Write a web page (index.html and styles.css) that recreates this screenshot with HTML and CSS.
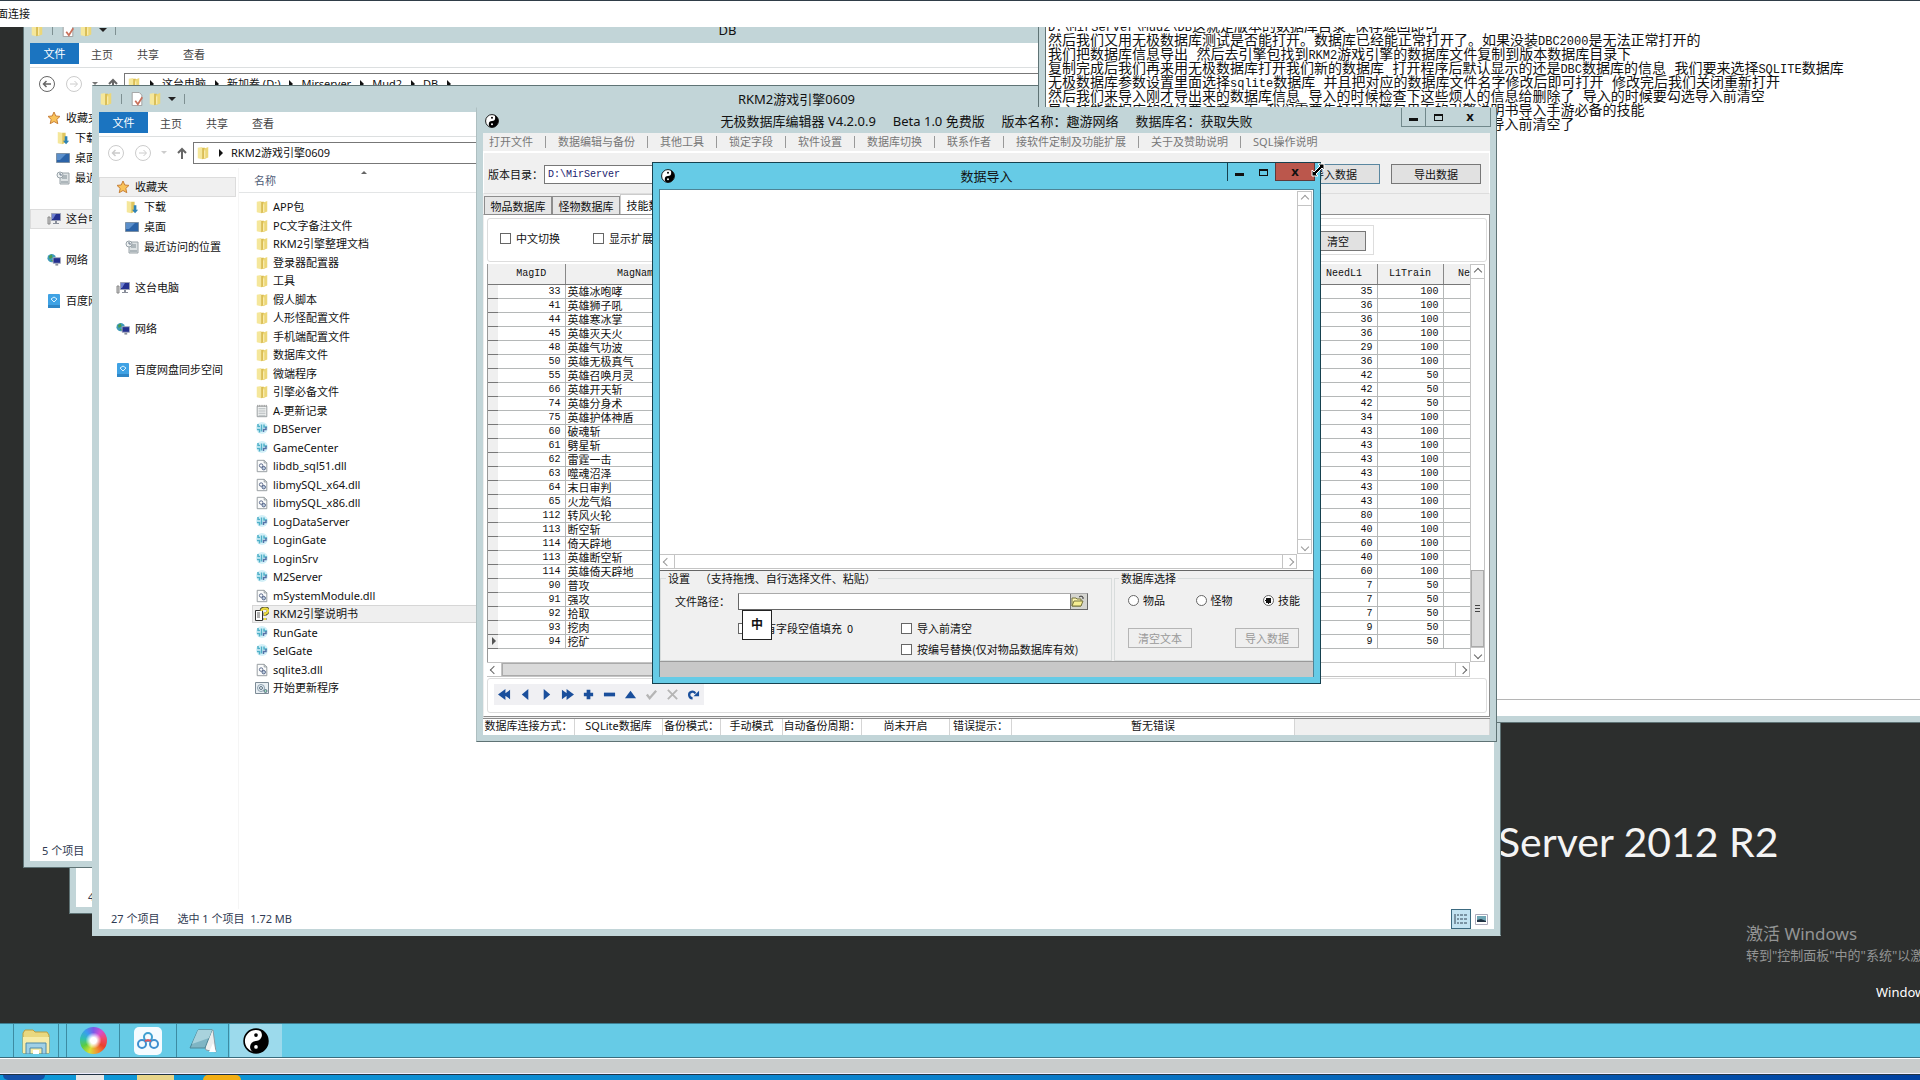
FILE: index.html
```
<!DOCTYPE html>
<html lang="zh-CN">
<head>
  <meta charset="utf-8">
  <title>远程桌面连接</title>
  <link rel="stylesheet" href="styles.css">
</head>
<body>
  <!-- Icon set -->
  <svg class="defs" width="0" height="0">
    <symbol id="i-folder" viewBox="0 0 14 16">
      <path d="M1 2l5-1v14l-5-1z" fill="#f5e79b"/><path d="M6 2h3l1 1v11l-4 1z" fill="#d9bb4e"/><path d="M8 3l5-2v12l-5 2z" fill="#ecd778"/><path d="M9 5v9" stroke="#fff6c8"/>
    </symbol>
    <symbol id="i-star" viewBox="0 0 14 14">
      <path d="M7 1l1.800 4 4.200.4-3.200 3 1 4.300L7 10.500 3.200 12.700l1-4.300L1 5.400 5.200 5z" fill="#f9c35a" stroke="#c8813a"/>
    </symbol>
    <symbol id="i-down" viewBox="0 0 14 16">
      <path d="M1 1l5 1v13l-5-1z" fill="#f5e79b"/><path d="M6 2h4v11l-4 2z" fill="#e0c65e"/><path d="M9 6h3v5h2l-3.500 4L7 11h2z" fill="#2f83b5"/>
    </symbol>
    <symbol id="i-desk" viewBox="0 0 14 12">
      <path d="M.500 1.500h13v9H.500z" fill="#2b63a8" stroke="#7a8fa5"/><path d="M1 2h9L4 8H1z" fill="#5b8fcb"/>
    </symbol>
    <symbol id="i-recent" viewBox="0 0 14 14">
      <path d="M4 2h9v11H4z" fill="#dde2e4" stroke="#9aa3a8"/><path d="M6 5h5M6 7h5M5 11h7" stroke="#7f8b92"/><circle cx="4" cy="4" r="3" fill="#eef1f2" stroke="#98a2a8"/><path d="M4 2v2h2" stroke="#678" fill="none"/>
    </symbol>
    <symbol id="i-pc" viewBox="0 0 14 14">
      <path d="M1 5h2v7H1z" fill="#ccc" stroke="#888"/><path d="M4.500 1.500h9v7h-9z" fill="#23308f" stroke="#9a9fb5"/><path d="M5 2h4l-3 5H5z" fill="#6d7fd0"/><path d="M8 9h2v2h2v1H6v-1h2z" fill="#8a8f9b"/>
    </symbol>
    <symbol id="i-net" viewBox="0 0 15 14">
      <circle cx="5" cy="5" r="4.500" fill="#3e9bb8"/><path d="M2 3l3-2 1 3-3 2zM4 7h3l-1 2z" fill="#4a9a4c"/><path d="M6.500 4.500h8v6h-8z" fill="#23308f" stroke="#a8adc0"/><path d="M9 11h3v2H9z" fill="#8a8f9b"/>
    </symbol>
    <symbol id="i-pan" viewBox="0 0 14 14">
      <rect x="1" y="0" width="12" height="14" rx="1" fill="#3fa2e4"/><path d="M4 5l3-2 3 2-3 3z" fill="none" stroke="#d9f1ff"/><path d="M1 11h12v3H1z" fill="#2f86c6"/>
    </symbol>
    <symbol id="i-text" viewBox="0 0 14 16">
      <path d="M1.500 2.500h11v12h-11z" fill="#f5f6f6" stroke="#8d9396"/><path d="M3 5h8M3 7h8M3 9h8M3 11h8M3 13h8" stroke="#b4babd"/><path d="M2 1v2M4 1v2M6 1v2M8 1v2M10 1v2M12 1v2" stroke="#999"/>
    </symbol>
    <symbol id="i-exe" viewBox="0 0 14 14">
      <circle cx="7" cy="6" r="6" fill="#d3f0f8"/><path d="M3 2v2.500h2M2 7.500h2.500v3M6.500 2.500v7M9 2.500V5h3" stroke="#4fb0c8" stroke-width="1.500" fill="none"/><path d="M8.500 10V7.500H11V5" stroke="#5573a8" stroke-width="1.500" fill="none"/>
    </symbol>
    <symbol id="i-dll" viewBox="0 0 14 16">
      <path d="M1.500 1.500h8l3 3v10h-11z" fill="#fafbfb" stroke="#8b9297"/><path d="M9.500 1.500v3h3" fill="none" stroke="#8b9297"/><circle cx="6" cy="7.500" r="2" fill="none" stroke="#4a5a80"/><circle cx="9" cy="10.500" r="2" fill="#bcd" stroke="#4a5a80"/>
    </symbol>
    <symbol id="i-chm" viewBox="0 0 14 14">
      <path d="M.500 3.500h7v10h-7z" fill="#fff" stroke="#333"/><path d="M2 6h3M2 8h3M2 10h3" stroke="#666"/><path d="M6 4q0-3 4-3t3 4q-1 2-3 2v2M10 11v2" stroke="#555533" stroke-width="3" fill="none"/><path d="M6.500 4q0-2.500 3.500-2.500t3 3q-1 2-3 2v2M10 11v2" stroke="#eedc3c" stroke-width="2" fill="none"/>
    </symbol>
    <symbol id="i-bat" viewBox="0 0 14 12">
      <path d="M.500.500h13v11H.500z" fill="#e9eff3" stroke="#7d8b96"/><circle cx="6" cy="6" r="3.500" fill="none" stroke="#8ba0b0"/><circle cx="6" cy="6" r="1.500" fill="none" stroke="#5d7385"/><circle cx="10.500" cy="9" r="1.500" fill="#9db" stroke="#5d7385"/>
    </symbol>
    <symbol id="i-prop" viewBox="0 0 14 16">
      <path d="M1.500.500h8l3 3v12h-11z" fill="#fff" stroke="#999"/><path d="M5 10l3 4 5-8" stroke="#c9705a" stroke-width="2" fill="none"/>
    </symbol>
    <symbol id="i-yin" viewBox="0 0 24 24">
      <circle cx="12" cy="12" r="11" fill="#fff" stroke="#000" stroke-width="1.500"/><path d="M12 1a11 11 0 0 1 0 22 5.500 5.500 0 0 1 0-11 5.500 5.500 0 0 0 0-11z" fill="#000"/><circle cx="12" cy="6.500" r="1.700"/><circle cx="12" cy="17.500" r="1.700" fill="#fff"/>
    </symbol>
    <symbol id="i-back" viewBox="0 0 18 18">
      <circle cx="9" cy="9" r="7.500" fill="none" stroke="currentColor"/><path d="M13 9H6M8.500 6l-3 3 3 3" fill="none" stroke="currentColor" stroke-width="1.500"/>
    </symbol>
    <symbol id="i-fwd" viewBox="0 0 18 18">
      <circle cx="9" cy="9" r="7.500" fill="none" stroke="currentColor"/><path d="M5 9h7M9.500 6l3 3-3 3" fill="none" stroke="currentColor"/>
    </symbol>
    <symbol id="i-up" viewBox="0 0 10 12">
      <path d="M5 12V2M1 6l4-4 4 4" fill="none" stroke="#666" stroke-width="2"/>
    </symbol>
  </svg>

  <header class="rdp-title">面连接</header>

  <main class="desktop">
    <div class="brand">Server 2012 R2</div>
    <div class="activate">
      <p class="activate-title">激活 Windows</p>
      <p class="activate-text">转到"控制面板"中的"系统"以激活 Windows。</p>
    </div>
    <div class="build">Windows Server 2012 R2</div>

    <section class="win explorer explorer-hidden">
      <div class="explorer-body"></div>
      <footer class="explorer-status"><span>4 个项目</span></footer>
    </section>

    <!-- Explorer: DB -->
    <section class="win explorer explorer-db">
      <div class="titlebar">
        <div class="qat">
          <svg class="ic"><use href="#i-folder"/></svg><i></i>
          <svg class="ic"><use href="#i-prop"/></svg><svg class="ic"><use href="#i-folder"/></svg>
          <span class="qat-more"></span><i></i>
        </div>
        <h1>DB</h1>
      </div>
      <div class="ribbon"><button class="file-tab">文件</button><button>主页</button><button>共享</button><button>查看</button></div>
      <div class="addr-row">
        <svg class="round on"><use href="#i-back"/></svg><svg class="round"><use href="#i-fwd"/></svg>
        <span class="caret"></span><svg class="up"><use href="#i-up"/></svg>
        <div class="addr">
          <svg class="ic"><use href="#i-folder"/></svg>
          <b></b><span>这台电脑</span><b></b><span>新加卷 (D:)</span><b></b><span>Mirserver</span><b></b><span>Mud2</span><b></b><span>DB</span><b></b>
        </div>
      </div>
      <div class="explorer-body">
        <nav class="tree">
          <a href="#"><svg class="ic"><use href="#i-star"/></svg>收藏夹</a>
          <a href="#" class="sub"><svg class="ic"><use href="#i-down"/></svg>下载</a>
          <a href="#" class="sub"><svg class="ic"><use href="#i-desk"/></svg>桌面</a>
          <a href="#" class="sub"><svg class="ic"><use href="#i-recent"/></svg>最近访问的位置</a>
          <a href="#" class="root active"><svg class="ic"><use href="#i-pc"/></svg>这台电脑</a>
          <a href="#" class="root"><svg class="ic"><use href="#i-net"/></svg>网络</a>
          <a href="#" class="root"><svg class="ic"><use href="#i-pan"/></svg>百度网盘同步空间</a>
        </nav>
      </div>
      <footer class="explorer-status"><span>5 个项目</span></footer>
    </section>

    <!-- Explorer: engine folder -->
    <section class="win explorer explorer-main">
      <div class="titlebar">
        <div class="qat">
          <svg class="ic"><use href="#i-folder"/></svg><i></i>
          <svg class="ic"><use href="#i-prop"/></svg><svg class="ic"><use href="#i-folder"/></svg>
          <span class="qat-more"></span><i></i>
        </div>
        <h1>RKM2游戏引擎0609</h1>
      </div>
      <div class="ribbon"><button class="file-tab">文件</button><button>主页</button><button>共享</button><button>查看</button></div>
      <div class="addr-row">
        <svg class="round"><use href="#i-back"/></svg><svg class="round"><use href="#i-fwd"/></svg>
        <span class="caret off"></span><svg class="up"><use href="#i-up"/></svg>
        <div class="addr"><svg class="ic"><use href="#i-folder"/></svg><b></b><span>RKM2游戏引擎0609</span></div>
      </div>
      <div class="explorer-body">
        <nav class="tree">
          <a href="#" class="active"><svg class="ic"><use href="#i-star"/></svg>收藏夹</a>
          <a href="#" class="sub"><svg class="ic"><use href="#i-down"/></svg>下载</a>
          <a href="#" class="sub"><svg class="ic"><use href="#i-desk"/></svg>桌面</a>
          <a href="#" class="sub"><svg class="ic"><use href="#i-recent"/></svg>最近访问的位置</a>
          <a href="#" class="root"><svg class="ic"><use href="#i-pc"/></svg>这台电脑</a>
          <a href="#" class="root"><svg class="ic"><use href="#i-net"/></svg>网络</a>
          <a href="#" class="root"><svg class="ic"><use href="#i-pan"/></svg>百度网盘同步空间</a>
        </nav>
        <div class="files">
          <div class="files-head">名称<span class="sort"></span></div>
          <ul id="fileList"></ul>
        </div>
      </div>
      <footer class="explorer-status">
        <span>27 个项目</span><span>选中 1 个项目&nbsp; 1.72 MB</span>
        <div class="views">
          <button class="view-btn on" aria-label="详细信息"><svg width="14" height="12" viewBox="0 0 14 12"><path d="M1 1v10M3 2h2M3 6h2M3 10h2M6 2h3M10 2h3M6 6h3M10 6h3M6 10h3M10 10h3" stroke="#345" fill="none"/></svg></button>
          <button class="view-btn" aria-label="大图标"><svg width="13" height="11" viewBox="0 0 13 11"><path d="M.500.500h12v10H.500z" fill="#fff" stroke="#aab"/><path d="M2 2h9v6H2z" fill="#6fa6b4"/><path d="M2 6l4-1 5 2v1H2z" fill="#234"/></svg></button>
        </div>
      </footer>
    </section>

    <!-- Notes -->
    <section class="win notes">
      <div class="notes-text">
        <p><code>D:\MirServer\Mud2\DB</code>这就是版本的数据库目录 保存返回即可</p>
        <p>然后我们又用无极数据库测试是否能打开。数据库已经能正常打开了。如果没装<code>DBC2000</code>是无法正常打开的</p>
        <p>我们把数据库信息导出 然后去引擎包找到<code>RKM2</code>游戏引擎的数据库文件复制到版本数据库目录下</p>
        <p>复制完成后我们再来用无极数据库打开我们新的数据库 打开程序后默认显示的还是<code>DBC</code>数据库的信息 我们要来选择<code>SQLITE</code>数据库</p>
        <p>无极数据库参数设置里面选择<code>sqlite</code>数据库 并且把对应的数据库文件名字修改后即可打开 修改完后我们关闭重新打开</p>
        <p>然后我们来导入刚才导出来的数据库信息 导入的时候检查下这些烦人的信息给删除了 导入的时候要勾选导入前清空</p>
        <p>导入技能数据库的时候要注意一下 我们需要先打开引擎包里面的引擎说明书导入手游必备的技能</p>
        <p>导入技能的时候不要再勾选清空了 因为前面已经导入过一次数据所以不导入前清空了</p>
      </div>
      <div class="notes-status"></div>
    </section>

    <!-- Database editor -->
    <section class="win editor">
      <div class="titlebar">
        <svg class="yin"><use href="#i-yin"/></svg>
        <h1>无极数据库编辑器 V4.2.0.9&nbsp;&nbsp;&nbsp;&nbsp; Beta 1.0 免费版&nbsp;&nbsp;&nbsp;&nbsp; 版本名称：趣游网络&nbsp;&nbsp;&nbsp;&nbsp; 数据库名：获取失败</h1>
        <div class="controls">
          <button aria-label="最小化"><span class="g-min"></span></button><button aria-label="最大化"><span class="g-max"></span></button><button aria-label="关闭">x</button>
        </div>
      </div>
      <div class="editor-body">
        <nav class="menu">
          <a href="#">打开文件</a><a href="#">数据编辑与备份</a><a href="#">其他工具</a><a href="#">锁定字段</a><a href="#">软件设置</a><a href="#">数据库切换</a><a href="#">联系作者</a><a href="#">接软件定制及功能扩展</a><a href="#">关于及赞助说明</a><a href="#">SQL操作说明</a>
        </nav>
        <div class="path-row">
          <label for="verPath">版本目录：</label>
          <input type="text" id="verPath" value="D:\MirServer">
          <button class="btn focus">导入数据</button>
          <button class="btn">导出数据</button>
        </div>
        <div class="tabs"><button>物品数据库</button><button>怪物数据库</button><button class="current">技能数据库</button></div>
        <div class="page">
          <div class="options">
            <label><input type="checkbox">中文切换</label>
            <label><input type="checkbox">显示扩展</label>
            <div class="search"><button class="btn">清空</button></div>
          </div>
          <div class="grid">
            <div class="grid-view">
              <table>
                <colgroup><col class="c-mark"><col class="c-id"><col class="c-name"><col><col class="c-num"><col class="c-num"><col class="c-last"></colgroup>
                <thead><tr><th></th><th>MagID</th><th>MagName</th><th></th><th>NeedL1</th><th>L1Train</th><th>Ne</th></tr></thead>
                <tbody id="magicRows"></tbody>
              </table>
            </div>
            <div class="vscroll"><span class="arrow a-up"></span><span class="track"></span><span class="thumb"></span><span class="arrow a-down"></span></div>
            <div class="hscroll"><span class="arrow a-left"></span><span class="thumb"></span><span class="track"></span><span class="arrow a-right"></span></div>
          </div>
          <div class="navigator">
            <div class="nav-btns">
              <button aria-label="第一条"><svg viewBox="0 0 14 14"><path d="M8 1v12L0 7zM13 2v10L6 7z"/></svg></button>
              <button aria-label="上一条"><svg viewBox="0 0 14 14"><path d="M10 1v12L3 7z"/></svg></button>
              <button aria-label="下一条"><svg viewBox="0 0 14 14"><path d="M4 1v12l7-6z"/></svg></button>
              <button aria-label="最后一条"><svg viewBox="0 0 14 14"><path d="M1 2v10l7-5zM6 1v12l8-6z"/></svg></button>
              <button aria-label="新增"><svg viewBox="0 0 14 14"><path d="M5 2h4v3h3v4H9v3H5V9H2V5h3z"/></svg></button>
              <button aria-label="删除"><svg viewBox="0 0 14 14"><path d="M1 5h12v4H1z"/></svg></button>
              <button aria-label="编辑"><svg viewBox="0 0 14 14"><path d="M7 3l6 8H1z"/></svg></button>
              <button aria-label="提交" disabled><svg viewBox="0 0 14 14"><path d="M2 7l3 4 7-8" fill="none" stroke="#b5b5b5" stroke-width="2.500"/></svg></button>
              <button aria-label="取消" disabled><svg viewBox="0 0 14 14"><path d="M2 2l10 10M12 2L2 12" stroke="#b5b5b5" stroke-width="2"/></svg></button>
              <button aria-label="刷新"><svg viewBox="0 0 14 14"><path d="M6 11a3.500 3.500 0 1 1 3-5" fill="none" stroke="#1a4f9c" stroke-width="2.500"/><path d="M7 9h6V3z"/></svg></button>
            </div>
          </div>
        </div>
        <footer class="db-status">
          <span class="s1">数据库连接方式：</span><span class="s2">SQLite数据库</span><span class="s3">备份模式：</span><span class="s4">手动模式</span><span class="s5">自动备份周期：</span><span class="s6">尚未开启</span><span class="s7">错误提示：</span><span class="s8">暂无错误</span><span class="s9"></span>
        </footer>
      </div>
    </section>

    <!-- Import dialog -->
    <section class="win dialog" role="dialog">
      <div class="titlebar">
        <svg class="yin"><use href="#i-yin"/></svg>
        <h1>数据导入</h1>
        <div class="controls">
          <button aria-label="最小化"><span class="g-min"></span></button><button aria-label="最大化"><span class="g-max"></span></button><button class="close" aria-label="关闭">x</button>
        </div>
      </div>
      <div class="dialog-body">
        <div class="memo">
          <textarea aria-label="数据"></textarea>
          <div class="vscroll"><span class="arrow a-up"></span><span class="track"></span><span class="arrow a-down"></span></div>
          <div class="hscroll"><span class="arrow a-left"></span><span class="track"></span><span class="arrow a-right"></span></div>
        </div>
        <div class="groups">
          <fieldset class="set-group">
            <legend>设置&nbsp;&nbsp;&nbsp;&nbsp;（支持拖拽、自行选择文件、粘贴）</legend>
            <label for="filePath">文件路径：</label>
            <div class="file-box">
              <input type="text" id="filePath">
              <button aria-label="打开"><svg width="13" height="12" viewBox="0 0 13 12"><path d="M1 3h4l1 1h4v7H1z" fill="#fdf6b4" stroke="#77743c"/><path d="M1 11l2-5h9l-2 5z" fill="#f7ee92" stroke="#77743c"/><path d="M8 2q2-2 4 0v2" fill="none" stroke="#333"/></svg></button>
            </div>
            <label class="fill"><input type="checkbox">所有字段空值填充&nbsp; 0</label>
            <label><input type="checkbox">导入前清空</label>
            <label class="replace"><input type="checkbox">按编号替换(仅对物品数据库有效)</label>
          </fieldset>
          <fieldset class="db-group">
            <legend>数据库选择</legend>
            <div class="radios">
              <label><input type="radio" name="db">物品</label>
              <label><input type="radio" name="db">怪物</label>
              <label><input type="radio" name="db" checked>技能</label>
            </div>
            <div class="actions"><button class="btn" disabled>清空文本</button><button class="btn" disabled>导入数据</button></div>
          </fieldset>
        </div>
        <div class="progress"></div>
      </div>
    </section>

    <div class="ime">中</div>
    <svg class="cursor" width="14" height="14" viewBox="0 0 14 14"><path d="M7 1h6v6l-2-2-6 6 2 2H1V7l2 2 6-6z" fill="#000" stroke="#fff"/></svg>
  </main>

  <!-- Remote taskbar -->
  <nav class="taskbar">
    <button class="task first" aria-label="文件资源管理器"><svg width="30" height="26" viewBox="0 0 30 26"><path d="M2 5l2-3h8l2 2h12l2 3v18H2z" fill="#e9d87f" stroke="#b99d42"/><path d="M2 9h26v16H2z" fill="#f6eca9"/><path d="M5 26V15h20v11h-4v-6H9v6z" fill="#9fd0e6" stroke="#4c8aa8"/><path d="M12 26v-4h6v4" fill="#fff"/></svg></button>
    <button class="task" aria-label="浏览器"><span class="wheel"></span></button>
    <button class="task wide" aria-label="百度网盘"><svg width="28" height="28" viewBox="0 0 28 28"><rect width="28" height="28" rx="5" fill="#f4fbff"/><circle cx="14" cy="10" r="4" fill="none" stroke="#3f9fd0" stroke-width="2"/><circle cx="8" cy="17" r="4" fill="none" stroke="#3f8fd0" stroke-width="2"/><circle cx="20" cy="17" r="4" fill="none" stroke="#3f8fd0" stroke-width="2"/><path d="M11 14l3-1 3 1" stroke="#e0555e" stroke-width="2" fill="none"/></svg></button>
    <button class="task" aria-label="记事本"><svg width="28" height="26" viewBox="0 0 28 26"><path d="M10 2h14l3 22-10-2z" fill="#eceeee" stroke="#8b9ba3"/><path d="M9 2h14l-7 18H1z" fill="#7fb5c4" stroke="#4e8797"/><path d="M9 2h14l-3 8L3 16z" fill="#a9d3dd"/><path d="M20 24l7 0-3-9z" fill="#fff"/></svg></button>
    <button class="task active" aria-label="无极数据库编辑器"><svg width="26" height="26"><use href="#i-yin"/></svg></button>
  </nav>
  <div class="rdp-scroll"></div>
  <footer class="host-bar">
    <span class="h-blue"></span><span class="h-white"></span><span class="h-folder"></span><span class="h-yellow"></span>
  </footer>

  <script src="script.js"></script>
</body>
</html>
```
FILE: styles.css
```
* {
  box-sizing: border-box;
}
body {
  margin: 0;
  height: 100vh;
  display: flex;
  flex-direction: column;
  overflow: hidden;
  font-family: "Noto Sans", "Noto Sans CJK SC", sans-serif;
  font-size: 11px;
  line-height: 14px;
  color: #111;
}
button, input, textarea {
  font: inherit;
  color: inherit;
  margin: 0;
  padding: 0;
  border: none;
  background: none;
  border-radius: 0;
}
a {
  color: inherit;
  text-decoration: none;
}
h1, p, ul {
  margin: 0;
  padding: 0;
  font-weight: normal;
}
svg {
  display: block;
  flex: none;
}
.defs {
  position: absolute;
}
.rdp-title {
  height: 27px;
  flex: none;
  border-top: 1px solid #2f3d48;
  background: #fff;
  line-height: 26px;
  text-indent: -3px;
}

/* Desktop */
.desktop {
  flex: 1;
  position: relative;
  overflow: hidden;
  background: #2c2e2d;
}
.brand {
  position: absolute;
  left: 1498px;
  top: 788px;
  font-family: Lato, sans-serif;
  font-size: 41px;
  line-height: 54px;
  color: #f4f4f4;
  white-space: nowrap;
}
.activate {
  position: absolute;
  left: 1746px;
  top: 895px;
  color: #939494;
  white-space: nowrap;
}
.activate-title {
  font-size: 17px;
  line-height: 24px;
}
.activate-text {
  font-size: 13px;
  line-height: 18px;
}
.build {
  position: absolute;
  left: 1876px;
  top: 956px;
  font-size: 13px;
  line-height: 18px;
  color: #fff;
  white-space: nowrap;
}

/* Windows */
.win {
  position: absolute;
  display: flex;
  flex-direction: column;
  background: #c2d5d8;
  border: 1px solid #5f7375;
}
.titlebar {
  display: grid;
  grid-template-columns: 1fr auto 1fr;
  align-items: center;
  flex: none;
}
.titlebar h1 {
  grid-column: 2;
  font-size: 13px;
  line-height: 20px;
  white-space: nowrap;
}
.ic {
  width: 14px;
  height: 14px;
}

/* Explorer */
.explorer {
  width: 1409px;
  padding: 0 6px 6px;
}
.explorer-db {
  left: 23px;
  top: -11px;
  height: 852px;
}
.explorer-hidden {
  left: 69px;
  top: 100px;
  height: 787px;
}
.explorer-main {
  left: 92px;
  top: 58px;
  height: 851px;
  border-left-color: #c2d5d8;
  border-bottom-color: #c2d5d8;
}
.explorer .titlebar {
  height: 26px;
}
.qat {
  display: flex;
  align-items: center;
}
.qat i {
  width: 1px;
  height: 10px;
  background: #7e9092;
  margin: 0 8px;
}
.qat .ic + .ic {
  margin-left: 4px;
}
.qat-more, .caret {
  border: 4px solid transparent;
  border-top-color: #222;
  border-bottom: none;
}
.qat-more {
  margin-left: 6px;
}
.ribbon {
  display: flex;
  height: 25px;
  flex: none;
  align-items: flex-start;
  background: #fff;
  border-bottom: 1px solid #dcdfe0;
}
.ribbon button {
  height: 23px;
  width: 46px;
  color: #444;
}
.ribbon .file-tab {
  width: 49px;
  height: 21px;
  background: #1b74c0;
  color: #fff;
}
.addr-row {
  height: 31px;
  flex: none;
  display: flex;
  align-items: center;
  background: #fff;
  padding-left: 8px;
}
.round {
  width: 18px;
  height: 18px;
  margin-right: 9px;
  color: #ccc;
}
.round.on {
  color: #666;
}
.caret {
  border-width: 3px;
  border-bottom: none;
  border-top-color: #777;
  margin-right: 10px;
}
.caret.off {
  border-top-color: #ccc;
}
.up {
  width: 10px;
  height: 12px;
}
.addr {
  flex: 1;
  height: 22px;
  margin: 0 8px 0 6px;
  border: 1px solid #777;
  display: flex;
  align-items: center;
  padding-left: 2px;
  white-space: nowrap;
}
.addr b {
  border: 4px solid transparent;
  border-left-color: #111;
  border-right: none;
  margin: 0 8px 0 9px;
}
.explorer-body {
  flex: 1;
  min-height: 0;
  display: flex;
  background: #fff;
}
.tree {
  width: 140px;
  flex: none;
  padding-top: 9px;
  border-right: 1px solid #f5f5f5;
}
.tree a {
  display: flex;
  align-items: center;
  gap: 5px;
  height: 20px;
  margin-right: 2px;
  padding-left: 16px;
  border: 1px solid transparent;
  white-space: nowrap;
}
.tree .sub {
  padding-left: 25px;
}
.tree .root {
  margin-top: 21px;
}
.tree .active {
  background: #f0f0f0;
  border-color: #dcdcdc;
}
.files {
  flex: 1;
}
.files-head {
  position: relative;
  height: 25px;
  padding-left: 15px;
  line-height: 26px;
  color: #4f5d78;
  border-bottom: 1px solid #e3e5e6;
}
.sort {
  position: absolute;
  left: 122px;
  top: 3px;
  border: 3px solid transparent;
  border-bottom-color: #666;
  border-top: none;
}
.files ul {
  list-style: none;
  padding: 5px 0 0 13px;
}
.files li {
  display: flex;
  align-items: center;
  gap: 4px;
  height: 18px;
  padding-left: 2px;
  border: 1px solid transparent;
}
.files li:nth-child(even) {
  height: 19px;
}
.files li.selected {
  background: #efefef;
  border-color: #d6d6d6;
}
.explorer-status {
  height: 20px;
  flex: none;
  display: flex;
  align-items: center;
  gap: 18px;
  padding-left: 12px;
  background: #fff;
  color: #2f3a52;
}
.views {
  margin-left: auto;
  padding-right: 3px;
  display: flex;
}
.view-btn {
  width: 20px;
  height: 20px;
  display: flex;
  align-items: center;
  justify-content: center;
}
.view-btn.on {
  background: #c3e3f1;
  border: 1px solid #3c6a80;
}

/* Notes */
.notes {
  left: 1038px;
  right: -10px;
  top: -30px;
  height: 726px;
  padding: 22px 6px 6px;
}
.notes-text {
  flex: 1;
  background: #fff;
  border-left: 1px solid #5f7375;
  padding-left: 2px;
  font-family: "Liberation Mono", "Noto Sans CJK SC", monospace;
  font-size: 14px;
}
.notes-text p {
  height: 14px;
  white-space: nowrap;
}
.notes-text code {
  font-family: "Liberation Mono", monospace;
  font-size: 12px;
  line-height: 12px;
}
.notes-status {
  height: 17px;
  border-top: 1px solid #b5b5b5;
  background: #fff;
}

/* Title buttons */
.yin {
  width: 14px;
  height: 14px;
  margin-left: 8px;
}
.controls {
  grid-column: 3;
  align-self: start;
  justify-self: end;
  display: flex;
  margin-right: 5px;
}
.controls button {
  width: 24px;
  height: 18px;
  display: flex;
  align-items: center;
  justify-content: center;
  font-weight: bold;
  font-size: 13px;
}
.controls button:last-child {
  width: 40px;
  padding-bottom: 2px;
}
.g-min {
  width: 9px;
  height: 3px;
  margin-top: 4px;
  background: #111;
}
.g-max {
  width: 9px;
  height: 7px;
  border: 1px solid #111;
  border-width: 2px 1px 1px;
}

/* Editor */
.editor {
  left: 476px;
  top: 80px;
  width: 1021px;
  height: 635px;
  border-top-color: #c2d5d8;
  border-left-color: #aebfc1;
}
.editor .titlebar {
  height: 25px;
}
.editor .controls {
  border: 1px solid #71888b;
  border-top: none;
}
.editor .controls button:first-child {
  border-right: 1px solid #71888b;
}
.editor-body {
  flex: 1;
  min-height: 0;
  margin: 0 6px 6px;
  display: flex;
  flex-direction: column;
  background: #f0f0f0;
  font-family: "Noto Sans CJK SC", sans-serif;
}
.menu {
  display: flex;
  height: 19px;
  align-items: center;
  padding-left: 6px;
  color: #777;
  font-family: "Noto Sans", "Noto Sans CJK SC", sans-serif;
  border-bottom: 1px solid #fff;
}
.menu a {
  white-space: nowrap;
  line-height: 12px;
}
.menu a + a {
  margin-left: 12px;
  padding-left: 12px;
  border-left: 1px solid #999;
}
.path-row {
  display: flex;
  align-items: center;
  height: 42px;
  padding: 2px 8px 0 4px;
  border: 1px solid #fff;
  border-bottom-color: #ddd;
}
.path-row label {
  width: 56px;
  white-space: nowrap;
}
.path-row input {
  flex: 1;
  height: 19px;
  margin-right: 10px;
  padding-left: 3px;
  border: 1px solid #777;
  background: #fff;
  color: #1a1a6e;
  font-family: "Liberation Mono", monospace;
  font-size: 10px;
}
.btn {
  width: 90px;
  height: 20px;
  border: 1px solid #777;
  background: #e1e1e1;
}
.btn.focus {
  border-color: #5a87a0;
  margin-right: 11px;
}
.tabs {
  display: flex;
  align-items: flex-end;
  height: 20px;
  padding: 0 1px;
}
.tabs button {
  width: 68px;
  height: 18px;
  border: 1px solid #8d8d8d;
  border-bottom: none;
  background: #e6e6e6;
}
.tabs .current {
  height: 20px;
  background: #fff;
  border-color: #ccc;
}
.page {
  flex: 1;
  min-height: 0;
  display: flex;
  flex-direction: column;
  padding: 3px 2px 3px 3px;
  background: #fff;
  border: 1px solid #8d8d8d;
  border-left-color: #eee;
}
.options {
  display: flex;
  align-items: center;
  height: 44px;
  padding-left: 12px;
  border: 1px solid #ddd;
  border-radius: 3px;
}
.options label {
  width: 93px;
  padding-bottom: 4px;
}
label {
  display: flex;
  align-items: center;
  white-space: nowrap;
}
input[type="checkbox"] {
  appearance: none;
  width: 11px;
  height: 11px;
  margin-right: 5px;
  background: #fff;
  border: 1px solid #666;
}
.search {
  margin-left: auto;
  margin-right: 112px;
  width: 180px;
  height: 30px;
  padding: 5px 7px;
  border: 1px solid #ddd;
  text-align: right;
}
.search .btn {
  width: 56px;
}
.grid {
  flex: 1;
  min-height: 0;
  margin: 2px 2px 0 0;
  display: grid;
  grid-template: 1fr 15px / 1fr 15px;
}
.grid-view {
  overflow: hidden;
  border-left: 1px solid #999;
}
.grid table {
  width: 100%;
  table-layout: fixed;
  border-collapse: collapse;
}
.c-mark { width: 10px; }
.c-id { width: 67px; }
.c-name { width: 146px; }
.c-num { width: 66px; }
.c-last { width: 27px; }
.grid th {
  height: 20px;
  padding: 0;
  background: #f0f0f0;
  border-right: 1px solid #888;
  border-bottom: 1px solid #777;
  font: 10px/14px "Liberation Mono", monospace;
  overflow: hidden;
}
.grid th:first-child {
  border-right: none;
}
.grid th:last-child {
  text-align: right;
  border-right: none;
}
.grid td {
  height: 14px;
  padding: 0 4px 0 2px;
  border-right: 1px solid #b5b8b8;
  border-bottom: 1px solid #b5b8b8;
  line-height: 13px;
  white-space: nowrap;
}
.grid td:first-child {
  padding: 0;
  background: #efefef;
  border-right: none;
  border-bottom-color: #777;
}
.grid td:last-child {
  border-right: none;
}
.grid .num {
  text-align: right;
  font-family: "Liberation Mono", monospace;
  font-size: 10px;
}
.marker {
  display: block;
  width: 0;
  margin-left: 4px;
  border: 4px solid transparent;
  border-left-color: #555;
  border-right: none;
}

/* Scrollbars */
.vscroll, .hscroll {
  display: flex;
  background: #fff;
}
.vscroll {
  flex-direction: column;
  border: 1px solid #c4c4c4;
}
.hscroll {
  border-top: 1px solid #c4c4c4;
  border-bottom: 1px solid #c4c4c4;
}
.arrow {
  width: 15px;
  height: 14px;
  flex: none;
  display: flex;
  align-items: center;
  justify-content: center;
}
.vscroll .arrow {
  width: 13px;
}
.hscroll .arrow {
  height: 13px;
}
.arrow::before {
  content: "";
  width: 5px;
  height: 5px;
  border: 1px solid #666;
  border-width: 1px 0 0 1px;
}
.a-up { border-bottom: 1px solid #c4c4c4; }
.a-down { border-top: 1px solid #c4c4c4; }
.a-left { border-right: 1px solid #c4c4c4; }
.a-right { border: 1px solid #c4c4c4; border-width: 0 1px; }
.a-up::before { transform: rotate(45deg); }
.a-down::before { transform: rotate(225deg); }
.a-left::before { transform: rotate(-45deg); }
.a-right::before { transform: rotate(135deg); }
.track {
  flex: 1;
}
.thumb {
  background: #dadada;
  border: 1px solid #aaa;
}
.vscroll .thumb {
  height: 77px;
  padding: 34px 3px;
}
.vscroll .thumb::before {
  content: "";
  display: block;
  height: 7px;
  background: repeating-linear-gradient(#444 0 1px, transparent 1px 3px);
}
.hscroll .thumb {
  width: 340px;
}
.navigator {
  height: 35px;
  flex: none;
  margin-top: 1px;
  padding: 5px 6px;
  border: 1px solid #ddd;
  border-radius: 3px;
}
.nav-btns {
  display: inline-flex;
  background: #f0f0f3;
}
.nav-btns button {
  width: 21px;
  height: 21px;
  display: flex;
  align-items: center;
  justify-content: center;
  fill: #1a4f9c;
}
.nav-btns svg {
  width: 13px;
  height: 13px;
}
.db-status {
  display: flex;
  flex: none;
  height: 17px;
  margin-top: 1px;
  border-top: 1px solid #8d8d8d;
  font-family: "Noto Sans", "Noto Sans CJK SC", sans-serif;
}
.db-status span {
  background: #fff;
  border-right: 1px solid #d5d5d5;
  text-align: center;
  white-space: nowrap;
  overflow: hidden;
}
.s1 { width: 92px; }
.s2 { width: 88px; }
.s3 { width: 58px; }
.s4 { width: 62px; }
.s5 { width: 79px; }
.s6 { width: 88px; }
.s7 { width: 62px; }
.s8 { flex: 1; }
.db-status .s9 {
  width: 195px;
  background: #f0f0f0;
}

/* Import dialog */
.dialog {
  left: 652px;
  top: 135px;
  width: 669px;
  height: 522px;
  background: #66cbe6;
  border-color: #16414f;
}
.dialog .titlebar {
  height: 26px;
}
.dialog .controls button:first-child {
  border-left: 1px solid #16414f;
}
.dialog .controls .close {
  background: #bb574c;
  border: 1px solid #5f3a3a;
  border-top: none;
}
.dialog-body {
  flex: 1;
  min-height: 0;
  margin: 0 6px 6px;
  display: flex;
  flex-direction: column;
  background: #f0f0f0;
  border: 1px solid #4d8496;
  border-width: 1px 1px 0;
  font-family: "Noto Sans CJK SC", sans-serif;
}
.memo {
  flex: 1;
  display: grid;
  grid-template: 1fr 15px / 1fr 15px;
  padding: 1px 1px 1px 0;
  background: #fff;
  border-bottom: 1px solid #666;
}
.memo textarea {
  background: #fff;
  resize: none;
}
.memo .arrow::before {
  border-color: #999;
}
.groups {
  display: flex;
  gap: 2px;
}
fieldset {
  margin: 0;
  border: 1px solid #d8dcdc;
  height: 90px;
}
legend {
  padding: 0 2px;
}
.set-group {
  flex: 1;
  min-width: 0;
  padding: 5px 23px 0 14px;
  display: grid;
  grid-template-columns: 63px 163px 1fr;
  grid-template-rows: 22px 32px 10px;
  align-items: center;
}
.set-group legend {
  margin-left: -9px;
}
.file-box {
  grid-column: 2 / 4;
  display: flex;
  height: 17px;
  background: #fff;
  border: 1px solid #666;
  border-top-color: #aaa;
}
.file-box input {
  flex: 1;
}
.file-box button {
  width: 17px;
  background: #d5d5d0;
  border-left: 1px solid #777;
}
.fill {
  grid-column: 2;
}
.replace {
  grid-column: 3;
}
.db-group {
  width: 199px;
  padding: 8px 13px 0;
}
.db-group legend {
  margin-left: -9px;
}
.radios, .actions {
  display: flex;
  justify-content: space-between;
}
.radios {
  margin-bottom: 21px;
}
.radios label {
  width: 36px;
}
input[type="radio"] {
  appearance: none;
  flex: none;
  width: 11px;
  height: 11px;
  margin-right: 4px;
  border: 1px solid #666;
  border-radius: 50%;
  background: #fff;
}
input[type="radio"]:checked {
  background: radial-gradient(#111 0 3px, #fff 3px);
}
.actions .btn {
  width: 64px;
}
.btn:disabled {
  color: #999;
  background: #efefef;
  border-color: #b5b5b5;
}
.progress {
  height: 16px;
  background: #c8c8c8;
  border-top: 1px solid #999;
}
.ime {
  position: absolute;
  left: 742px;
  top: 583px;
  width: 30px;
  height: 30px;
  background: #fff;
  border: 1px solid #222;
  font-size: 12px;
  font-weight: bold;
  line-height: 28px;
  text-align: center;
}
.cursor {
  position: absolute;
  left: 1311px;
  top: 136px;
}

/* Bars below the desktop */
.taskbar {
  height: 35px;
  flex: none;
  display: flex;
  padding-left: 13px;
  background: #66cbe6;
  border-top: 1px solid #3e7f92;
  border-bottom: 1px solid #3a6c7c;
}
.task {
  width: 52px;
  display: flex;
  align-items: center;
  justify-content: center;
  border-right: 1px solid #3d8ba2;
}
.task.first {
  width: 46px;
  margin-right: 9px;
  border-left: 1px solid #3d8ba2;
  box-shadow: 7px 0 0 #66cbe6, 8px 0 0 #3d8ba2;
}
.task.wide {
  width: 57px;
}
.task.active {
  margin-left: 1px;
  background: #9cdaec;
  border: none;
}
.wheel {
  width: 27px;
  height: 27px;
  border-radius: 50%;
  background:
    radial-gradient(#fff 0 3px, transparent 8px),
    conic-gradient(#7b5be8, #d34fd0, #ee4a6a, #e8402c, #f09030, #d8e038, #5ccc40, #30c0b0, #3a9cf0, #7b5be8);
}
.rdp-scroll {
  height: 16px;
  flex: none;
  background: #c9cccc;
  border-top: 1px solid #fff;
  border-bottom: 1px solid #eef;
}
.host-bar {
  height: 6px;
  flex: none;
  display: flex;
  overflow: hidden;
  padding-left: 3px;
  border-top: 1px solid #234;
  background: linear-gradient(90deg, #0f9ad8, #0a80cc 50%, #0040a0);
}
.host-bar span {
  height: 5px;
}
.h-blue {
  width: 42px;
  margin-right: 31px;
  background: #1450a8;
  border-radius: 0 0 8px 8px;
}
.h-white {
  width: 28px;
  margin-right: 33px;
  background: #e6e6e6;
}
.h-folder {
  width: 37px;
  margin-right: 29px;
  background: #e8d58a;
}
.h-yellow {
  width: 38px;
  background: #f3ae14;
  border-radius: 8px 8px 0 0;
}
```
FILE: script.js
```
// Files shown in the engine folder: [icon, name]
var files = [
  ["folder", "APP包"],
  ["folder", "PC文字备注文件"],
  ["folder", "RKM2引擎整理文档"],
  ["folder", "登录器配置器"],
  ["folder", "工具"],
  ["folder", "假人脚本"],
  ["folder", "人形怪配置文件"],
  ["folder", "手机端配置文件"],
  ["folder", "数据库文件"],
  ["folder", "微端程序"],
  ["folder", "引擎必备文件"],
  ["text", "A-更新记录"],
  ["exe", "DBServer"],
  ["exe", "GameCenter"],
  ["dll", "libdb_sql51.dll"],
  ["dll", "libmySQL_x64.dll"],
  ["dll", "libmySQL_x86.dll"],
  ["exe", "LogDataServer"],
  ["exe", "LoginGate"],
  ["exe", "LoginSrv"],
  ["exe", "M2Server"],
  ["dll", "mSystemModule.dll"],
  ["chm", "RKM2引擎说明书"],
  ["exe", "RunGate"],
  ["exe", "SelGate"],
  ["dll", "sqlite3.dll"],
  ["bat", "开始更新程序"]
];

// Skills: [MagID, MagName, NeedL1, L1Train]
var magic = [
  [33, "英雄冰咆哮", 35, 100],
  [41, "英雄狮子吼", 36, 100],
  [44, "英雄寒冰掌", 36, 100],
  [45, "英雄灭天火", 36, 100],
  [48, "英雄气功波", 29, 100],
  [50, "英雄无极真气", 36, 100],
  [55, "英雄召唤月灵", 42, 50],
  [66, "英雄开天斩", 42, 50],
  [74, "英雄分身术", 42, 50],
  [75, "英雄护体神盾", 34, 100],
  [60, "破魂斩", 43, 100],
  [61, "劈星斩", 43, 100],
  [62, "雷霆一击", 43, 100],
  [63, "噬魂沼泽", 43, 100],
  [64, "末日审判", 43, 100],
  [65, "火龙气焰", 43, 100],
  [112, "转风火轮", 80, 100],
  [113, "断空斩", 40, 100],
  [114, "倚天辟地", 60, 100],
  [113, "英雄断空斩", 40, 100],
  [114, "英雄倚天辟地", 60, 100],
  [90, "普攻", 7, 50],
  [91, "强攻", 7, 50],
  [92, "拾取", 7, 50],
  [93, "挖肉", 9, 50],
  [94, "挖矿", 9, 50]
];

var fileList = document.getElementById("fileList");
files.forEach(function (file) {
  var selected = file[0] === "chm" ? ' class="selected"' : "";
  fileList.innerHTML += `<li${selected}><svg class="ic"><use href="#i-${file[0]}"/></svg>${file[1]}</li>`;
});

var rows = "";
magic.forEach(function (m, i) {
  var mark = i === magic.length - 1 ? '<span class="marker"></span>' : "";
  rows += `<tr><td>${mark}</td><td class="num">${m[0]}</td><td>${m[1]}</td><td></td><td class="num">${m[2]}</td><td class="num">${m[3]}</td><td></td></tr>`;
});
document.getElementById("magicRows").innerHTML = rows;
```
